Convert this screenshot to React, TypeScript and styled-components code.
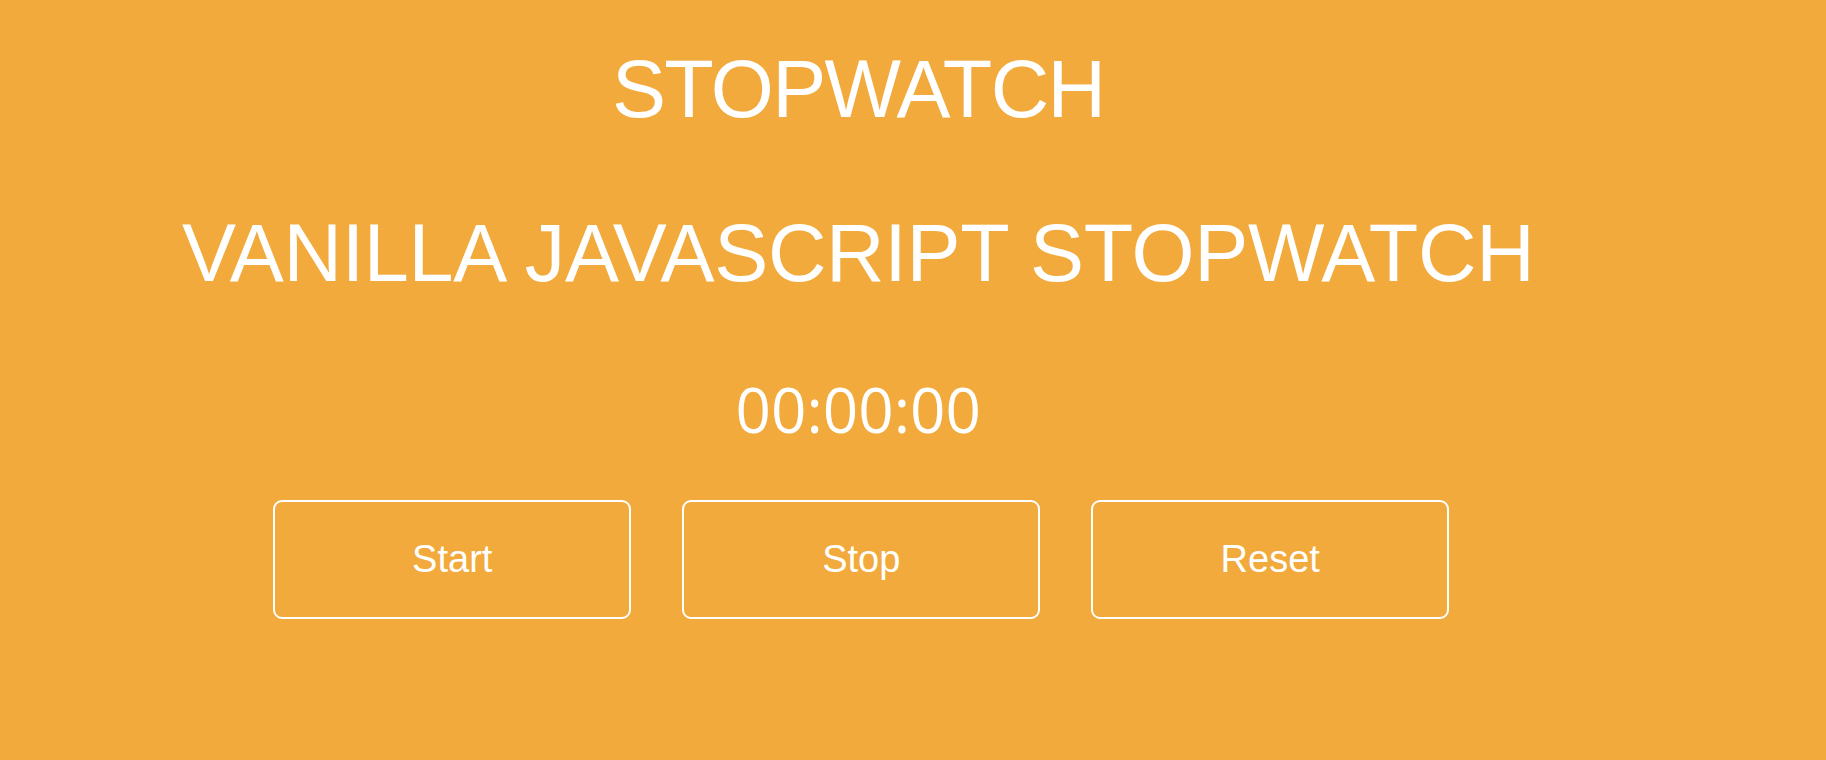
import * as React from "react"
import styled, { createGlobalStyle } from "styled-components"

const GlobalStyle = createGlobalStyle`
    html, body {
        margin: 0;
        padding: 0;
        background: #f2aa3c;
    }
    body {
        color: #ffffff;
        font-family: "Liberation Sans", Arial, sans-serif;
    }
`

const Page = styled.div`
    width: 94%;
    height: 760px;
    display: flex;
    flex-direction: column;
    align-items: center;
`

const Heading = styled.h1<{ $top: number, $spacing: number }>`
    margin: ${p => p.$top}px 0 0;
    font-family: "Liberation Sans", Arial, sans-serif;
    font-weight: normal;
    font-size: 81px;
    line-height: 1;
    letter-spacing: ${p => p.$spacing}px;
    white-space: nowrap;
    text-align: center;
`

const Timer = styled.div`
    margin-top: 84px;
    font-family: "Open Sans", sans-serif;
    font-size: 62px;
    line-height: 1;
    text-align: center;
`

const ButtonRow = styled.div`
    margin-top: 60px;
    padding-left: 6px;
    display: flex;
    justify-content: center;
    gap: 51px;
`

const Button = styled.button`
    width: 358px;
    height: 119px;
    box-sizing: border-box;
    border: 2px solid #ffffff;
    border-radius: 9px;
    background: transparent;
    color: #ffffff;
    font-family: "Liberation Sans", Arial, sans-serif;
    font-size: 38px;
    padding: 0;
    display: flex;
    align-items: center;
    justify-content: center;
    cursor: pointer;
`

const pad = (n: number) => (n < 10 ? "0" + n : String(n))

const App = () => {
    const [ticks, setTicks] = React.useState(0)
    const [running, setRunning] = React.useState(false)

    React.useEffect(() => {
        if (!running) return
        const id = setInterval(() => setTicks(t => t + 1), 10)
        return () => clearInterval(id)
    }, [running])

    const mins = Math.floor(ticks / 6000)
    const secs = Math.floor(ticks / 100) % 60
    const hund = ticks % 100

    return <>
        <GlobalStyle />
        <Page>
            <Heading $top={49} $spacing={-1.6}>STOPWATCH</Heading>
            <Heading $top={83} $spacing={-0.3}>VANILLA JAVASCRIPT STOPWATCH</Heading>
            <Timer>{pad(mins)}:{pad(secs)}:{pad(hund)}</Timer>
            <ButtonRow>
                <Button onClick={() => setRunning(true)}>Start</Button>
                <Button onClick={() => setRunning(false)}>Stop</Button>
                <Button onClick={() => { setRunning(false); setTicks(0) }}>Reset</Button>
            </ButtonRow>
        </Page>
    </>
}

export default App
